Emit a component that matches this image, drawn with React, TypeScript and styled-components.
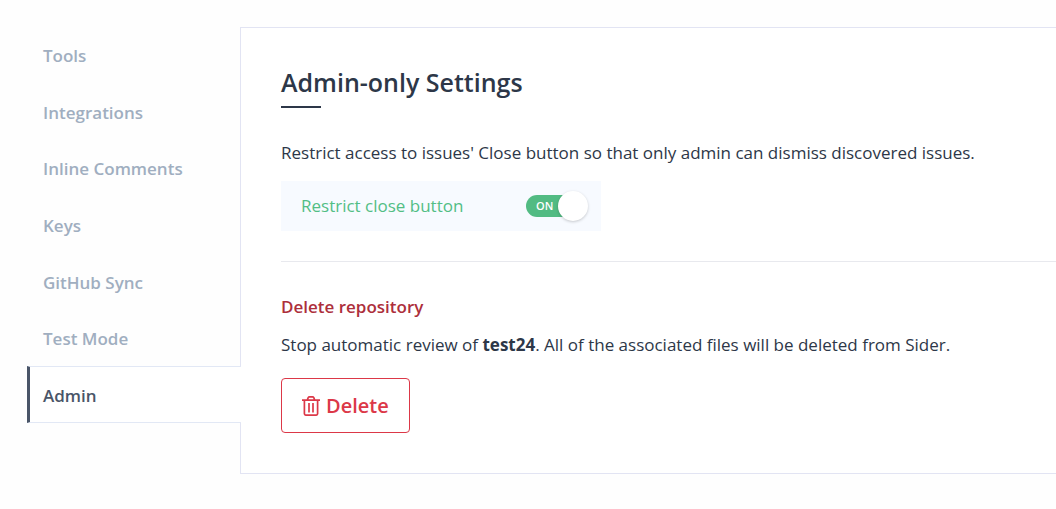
import React, { useState } from "react";
import styled, { createGlobalStyle } from "styled-components";

const GlobalStyle = createGlobalStyle`
  *, *::before, *::after { box-sizing: border-box; }
  body {
    margin: 0;
    background: #fefefe;
    color: #2d3748;
    font-family: "Open Sans", sans-serif;
    font-size: 17px;
    line-height: 26px;
  }
`;

const Page = styled.div`
  display: flex;
  align-items: stretch;
  padding: 27px 0 35px 27px;
`;

const SideNav = styled.nav`
  flex: none;
  width: 214px;
  margin-right: -1px;
  z-index: 1;
`;

const NavList = styled.ul`
  display: grid;
  grid-auto-rows: 1fr;
  height: 396px;
  margin: 0;
  padding: 0;
  list-style: none;
`;

const NavLink = styled.a<{ $active?: boolean }>`
  display: flex;
  align-items: center;
  height: 100%;
  padding: 2px 0 0 ${(p) => (p.$active ? 13 : 16)}px;
  border: solid ${(p) => (p.$active ? "#e2e8f5" : "transparent")};
  border-width: 1px 0;
  border-left: ${(p) => (p.$active ? "3px solid #4a5568" : "0")};
  background: ${(p) => (p.$active ? "#ffffff" : "transparent")};
  color: ${(p) => (p.$active ? "#4a5568" : "#a0aec0")};
  font-weight: 600;
  text-decoration: none;
`;

const Panel = styled.main`
  flex: 1;
  min-width: 0;
  padding: 38px 0 40px 40px;
  border: 1px solid #e2e4f3;
  border-right: 0;
  background: #ffffff;
`;

const Title = styled.h1`
  margin: 0 0 32px;
  font-size: 25px;
  font-weight: 600;
  line-height: 32px;

  &::after {
    content: "";
    display: block;
    width: 40px;
    height: 2px;
    margin-top: 8px;
    background: #2d3748;
  }
`;

const Text = styled.p`
  margin: 0;
`;

const SwitchRow = styled.label`
  display: flex;
  align-items: center;
  justify-content: space-between;
  max-width: 320px;
  height: 50px;
  margin-top: 15px;
  padding: 0 12px 1px 20px;
  background: #f7faff;
  color: #52be85;
  cursor: pointer;
`;

const Switch = styled.span`
  position: relative;
  display: flex;
  align-items: center;
  width: 63px;
  height: 30px;
`;

const SwitchInput = styled.input`
  position: absolute;
  inset: 0;
  width: 100%;
  height: 100%;
  margin: 0;
  opacity: 0;
  cursor: pointer;
`;

const Track = styled.span<{ $on: boolean }>`
  display: flex;
  align-items: center;
  justify-content: ${(p) => (p.$on ? "flex-start" : "flex-end")};
  width: 60px;
  height: 22px;
  padding: 0 10px;
  border-radius: 11px;
  background: ${(p) => (p.$on ? "#52bb83" : "#a0aec0")};
  color: #ffffff;
  font-size: 11px;
  font-weight: 600;
  line-height: 20px;
`;

const Knob = styled.span<{ $on: boolean }>`
  position: absolute;
  top: 0;
  left: ${(p) => (p.$on ? "32px" : "0")};
  width: 30px;
  height: 30px;
  border-radius: 50%;
  background: #ffffff;
  box-shadow: 0 1px 3px rgba(0, 0, 0, 0.2);
`;

const Divider = styled.hr`
  margin: 30px 0 32px;
  border: 0;
  border-top: 1px solid #e8e9ee;
`;

const DangerTitle = styled.h2`
  margin: 0 0 12px;
  color: #ad2f3b;
  font-size: 17px;
  font-weight: 600;
  line-height: 26px;
`;

const DeleteButton = styled.button`
  display: flex;
  align-items: center;
  gap: 6px;
  height: 55px;
  margin-top: 20px;
  padding: 0 20px;
  border: 1px solid #dc3848;
  border-radius: 4px;
  background: #ffffff;
  color: #dc3848;
  font: 600 20px/28px "Open Sans", sans-serif;
  cursor: pointer;
`;

const TrashIcon = () => (
  <svg width="18" height="20" viewBox="0 0 18 20" fill="none" stroke="currentColor" strokeWidth="1.7" aria-hidden="true">
    <path d="M0 4.2H18M5.3 4L6.2 1.7Q6.6 .9 7.5 .9H10.5Q11.4 .9 11.8 1.7L12.7 4M2.4 4.2V17.8Q2.4 19.1 3.7 19.1H14.3Q15.6 19.1 15.6 17.8V4.2" />
    <path d="M7 7V16.4M11 7V16.4" />
  </svg>
);

const sections = ["Tools", "Integrations", "Inline Comments", "Keys", "GitHub Sync", "Test Mode", "Admin"];

export default function App() {
  const [restricted, setRestricted] = useState(true);

  return (
    <>
      <GlobalStyle />
      <Page>
        <SideNav aria-label="Repository settings">
          <NavList>
            {sections.map((name) => (
              <li key={name}>
                <NavLink href="#" $active={name === "Admin"} aria-current={name === "Admin" ? "page" : undefined}>
                  {name}
                </NavLink>
              </li>
            ))}
          </NavList>
        </SideNav>
        <Panel>
          <Title>Admin-only Settings</Title>
          <Text>Restrict access to issues' Close button so that only admin can dismiss discovered issues.</Text>
          <SwitchRow htmlFor="restrict-close">
            Restrict close button
            <Switch>
              <Track $on={restricted}>{restricted ? "ON" : "OFF"}</Track>
              <Knob $on={restricted} />
              <SwitchInput
                id="restrict-close"
                type="checkbox"
                role="switch"
                checked={restricted}
                onChange={(e) => setRestricted(e.target.checked)}
              />
            </Switch>
          </SwitchRow>
          <Divider />
          <DangerTitle>Delete repository</DangerTitle>
          <Text>
            Stop automatic review of <strong>test24</strong>. All of the associated files will be deleted from Sider.
          </Text>
          <DeleteButton type="button">
            <TrashIcon />
            Delete
          </DeleteButton>
        </Panel>
      </Page>
    </>
  );
}
